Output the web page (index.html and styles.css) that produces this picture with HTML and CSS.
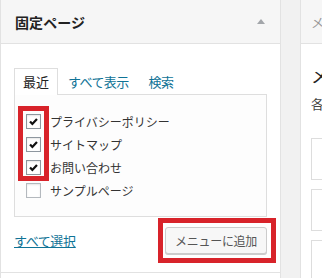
FILE: index.html
```html
<!DOCTYPE html>
<html lang="ja">
<head>
  <meta charset="UTF-8">
  <title>メニュー</title>
  <link rel="stylesheet" href="styles.css">
</head>
<body>

  <div class="screen">

    <!-- Pages box -->
    <div class="panel pages">
      <div class="panel-head">
        <h3>固定ページ</h3>
        <span class="arrow"></span>
      </div>

      <div class="panel-body">
        <ul class="tabs">
          <li class="tab active">最近</li>
          <li class="tab"><a href="#">すべて表示</a></li>
          <li class="tab"><a href="#">検索</a></li>
        </ul>

        <div class="tab-panel">
          <ul class="checklist">
            <li><span class="check on"><svg viewBox="0 0 15 15"><path d="M3.5 7.5 L6.2 10.3 L11.5 4.6"/></svg></span>プライバシーポリシー</li>
            <li><span class="check on"><svg viewBox="0 0 15 15"><path d="M3.5 7.5 L6.2 10.3 L11.5 4.6"/></svg></span>サイトマップ</li>
            <li><span class="check on"><svg viewBox="0 0 15 15"><path d="M3.5 7.5 L6.2 10.3 L11.5 4.6"/></svg></span>お問い合わせ</li>
            <li><span class="check"></span>サンプルページ</li>
          </ul>
          <span class="mark mark-checks"></span>
        </div>

        <div class="actions">
          <a class="select-all" href="#">すべて選択</a>
          <span class="add-wrap">
            <button class="add-btn">メニューに追加</button>
            <span class="mark mark-btn"></span>
          </span>
        </div>
      </div>
      <div class="panel-next"></div>
    </div>

    <!-- Menu structure -->
    <div class="panel menu">
      <div class="panel-head">
        <span class="menu-name">メニュー名</span>
      </div>
      <div class="panel-body menu-body">
        <h3>メニュー構造</h3>
        <p>各項目をドラッグして順番を変更してください。</p>
        <div class="menu-item"></div>
        <div class="menu-item"></div>
        <div class="menu-item"></div>
      </div>
    </div>

  </div>

</body>
</html>
```

FILE: styles.css
```css
body {
  margin: 0;
  font-family: "Noto Sans CJK JP", "Noto Sans", sans-serif;
  background-color: #f1f1f1;
  color: #333;
  overflow: hidden;
}

ul {
  list-style: none;
  margin: 0;
  padding: 0;
}

.screen {
  display: flex;
  align-items: flex-start;
  width: 600px;
}

/* Panels */
.panel {
  background-color: #fff;
  border-left: 1px solid #e2e2e2;
  border-right: 1px solid #e2e2e2;
  box-sizing: border-box;
}

.pages {
  width: 281px;
  flex-shrink: 0;
}

.menu {
  width: 300px;
  margin-left: 19px;
  flex-shrink: 0;
}

.panel-head {
  display: flex;
  align-items: center;
  justify-content: space-between;
  height: 43px;
  padding: 0 14px;
  background-color: #f6f6f6;
  border-bottom: 1px solid #e2e2e2;
}

.panel-head h3 {
  margin: 0;
  font-size: 14px;
  font-weight: 600;
  color: #222;
  letter-spacing: 0.1px;
}

.arrow {
  width: 0;
  height: 0;
  border-left: 4px solid transparent;
  border-right: 4px solid transparent;
  border-bottom: 5px solid #a3a6aa;
  margin-right: 1px;
}

.panel-body {
  padding: 24px 13px 18px;
  border-bottom: 1px solid #e2e2e2;
}

.panel-next {
  height: 30px;
}

/* Tabs */
.tabs {
  display: flex;
  font-size: 13px;
  line-height: 17px;
  letter-spacing: -0.6px;
}

.tab {
  padding: 5px 10px 4px;
}

.tab a {
  color: #0f7396;
  text-decoration: none;
}

.tab.active {
  padding: 4px 8px;
  border: 1px solid #dedede;
  border-bottom: none;
  background-color: #fff;
  color: #222;
  letter-spacing: 0;
  margin-bottom: -1px;
  position: relative;
  z-index: 1;
}

.tab-panel {
  position: relative;
  padding: 15px 11px 14px;
  border: 1px solid #dedede;
  background-color: #fdfdfd;
}

/* Checklist */
.checklist li {
  display: flex;
  align-items: center;
  height: 23px;
  font-size: 12px;
  color: #333;
}

.check {
  display: flex;
  align-items: center;
  justify-content: center;
  width: 15px;
  height: 15px;
  margin-right: 9px;
  box-sizing: border-box;
  border: 1px solid #b4b9be;
  background-color: #fff;
  box-shadow: inset 0 1px 2px rgba(0, 0, 0, 0.1);
}

.check.on {
  border-color: #8d969e;
}

.check svg {
  width: 13px;
  height: 13px;
  fill: none;
  stroke: #111;
  stroke-width: 2.6;
}

/* Red annotation frames */
.mark {
  position: absolute;
  border: 5px solid #d8232a;
  box-sizing: border-box;
}

.mark-checks {
  left: 3px;
  top: 11px;
  width: 31px;
  height: 75px;
}

.mark-btn {
  left: -7px;
  right: -9px;
  top: -9px;
  bottom: -9px;
}

/* Bottom actions */
.actions {
  display: flex;
  align-items: center;
  justify-content: space-between;
  margin-top: 10px;
}

.select-all {
  font-size: 13px;
  letter-spacing: -0.4px;
  color: #0f7396;
  text-decoration: underline;
}

.add-wrap {
  position: relative;
  display: flex;
}

.add-btn {
  height: 27px;
  padding: 0 9px;
  font-family: inherit;
  font-size: 12px;
  letter-spacing: -0.3px;
  color: #555;
  background-color: #f7f7f7;
  border: 1px solid #cccccc;
  border-radius: 3px;
  box-shadow: 0 1px 0 #ccc;
}

/* Menu side */
.menu-name {
  font-size: 13px;
  color: #999;
  margin-left: -4px;
}

.menu-body {
  padding: 19px 10px;
  border-bottom: none;
}

.menu-body h3 {
  margin: 0;
  font-size: 18px;
  font-weight: normal;
  line-height: 24px;
  color: #222;
}

.menu-body p {
  margin: 7px 0 25px;
  font-size: 13px;
  color: #444;
  white-space: nowrap;
}

.menu-item {
  height: 40px;
  border: 1px solid #dddddd;
  margin-bottom: 9px;
}
```
